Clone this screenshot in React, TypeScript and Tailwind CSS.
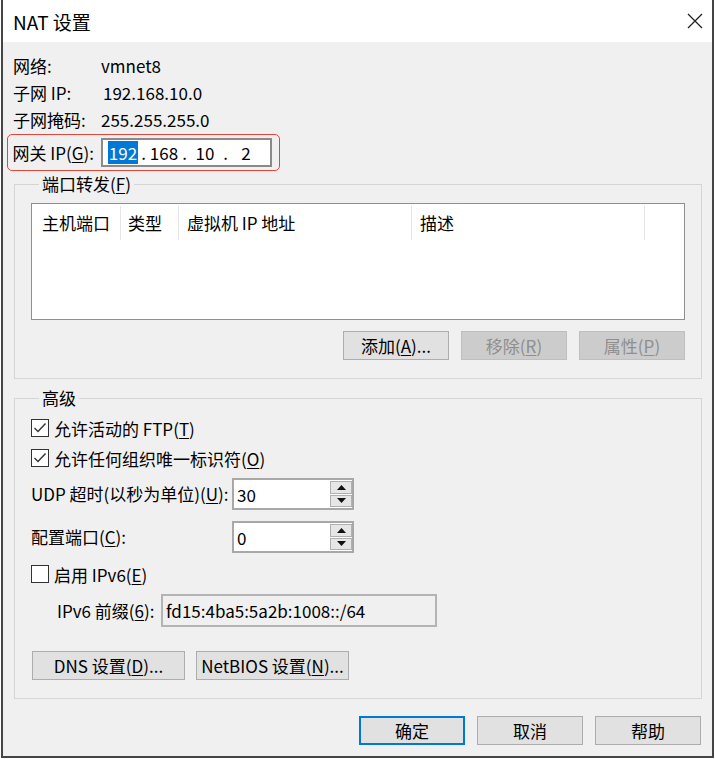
import React from "react";

const FONT = "font-['Noto_Sans_CJK_SC','Noto_Sans',sans-serif]";

function U({ children }: { children: React.ReactNode }) {
  return <span className="underline decoration-1 underline-offset-[2px]">{children}</span>;
}

function Btn({
  children,
  className = "",
  disabled = false,
  primary = false,
}: {
  children: React.ReactNode;
  className?: string;
  disabled?: boolean;
  primary?: boolean;
}) {
  const base = "h-[29px] flex items-center justify-center text-[17px] leading-none";
  const look = disabled
    ? "bg-[#cccccc] border border-[#bfbfbf] text-[#8f8f8f]"
    : primary
    ? "bg-[#e1e1e1] border-2 border-[#0078d7] text-black"
    : "bg-[#e1e1e1] border border-[#adadad] text-black";
  return <div className={`${base} ${look} ${className}`}>{children}</div>;
}

function Checkbox({ checked, label }: { checked: boolean; label: React.ReactNode }) {
  return (
    <div className="h-[30px] flex items-center gap-[5px]">
      <span className="w-[18px] h-[18px] border border-[#333333] bg-white flex items-center justify-center">
        {checked && (
          <svg width="16" height="16" viewBox="0 0 16 16">
            <polyline points="2.5,8 6,11.5 13.5,3.5" fill="none" stroke="#333333" strokeWidth="1.4" />
          </svg>
        )}
      </span>
      <span className="text-[17px] leading-none">{label}</span>
    </div>
  );
}

function SpinBox({ value }: { value: string }) {
  return (
    <div className="w-[122px] h-[32px] border-2 border-[#a8a8a8] bg-white flex">
      <div className="flex-1 pl-[3px] flex items-center text-[17px] leading-none">{value}</div>
      <div className="w-[22px] flex flex-col gap-[1px] py-[1px]">
        <div className="h-[13px] border border-[#b0b0b0] bg-[#e6e6e6] flex items-center justify-center">
          <svg width="9" height="5" viewBox="0 0 9 5">
            <polygon points="0,5 4.5,0 9,5" fill="#111111" />
          </svg>
        </div>
        <div className="h-[13px] border border-[#b0b0b0] bg-[#e6e6e6] flex items-center justify-center">
          <svg width="9" height="5" viewBox="0 0 9 5">
            <polygon points="0,0 9,0 4.5,5" fill="#111111" />
          </svg>
        </div>
      </div>
    </div>
  );
}

function IpField({ value, selected, dot }: { value: string; selected?: boolean; dot: boolean }) {
  return (
    <div className="flex items-center">
      <div className="w-[37px] flex justify-center">
        <span className={selected ? "bg-[#0078d7] text-white px-[1px] leading-[23px]" : "leading-[23px]"}>{value}</span>
      </div>
      <div className="w-[4px] flex justify-center">{dot ? "." : ""}</div>
    </div>
  );
}

export default function App() {
  return (
    <div className={`w-[715px] h-[759px] bg-white text-black ${FONT}`}>
      <div className="ml-[1px] w-[713px] h-[758px] border-2 border-t-0 border-[#454545] flex flex-col">
        {/* Title bar */}
        <div className="h-[42px] bg-white flex items-center justify-between pl-[10px] pr-[9px]">
          <span className="text-[19px] leading-none">NAT 设置</span>
          <svg width="16" height="16" viewBox="0 0 16 16">
            <path d="M1 1 L15 15 M15 1 L1 15" stroke="#222222" strokeWidth="1.3" />
          </svg>
        </div>

        {/* Body */}
        <div className="flex-1 bg-[#f0f0f0] pl-[10px] pt-[10px] flex flex-col text-[17px]">
          <div className="h-[27px] flex items-center">
            <span className="w-[88px]">网络:</span>
            <span>vmnet8</span>
          </div>
          <div className="h-[27px] flex items-center">
            <span className="w-[90px]">子网 IP:</span>
            <span>192.168.10.0</span>
          </div>
          <div className="h-[27px] flex items-center">
            <span className="w-[88px]">子网掩码:</span>
            <span>255.255.255.0</span>
          </div>

          {/* Gateway (highlighted) */}
          <div className="-ml-[6px] mt-[1px] w-[273px] h-[37px] border-[1.5px] border-[#e4463a] rounded-[5px] pl-[4.5px] flex items-center">
            <span className="w-[88px]">
              网关 IP(<U>G</U>):
            </span>
            <div className="w-[171px] h-[29px] border-2 border-[#8a8a8a] bg-white pl-[2px] flex items-center">
              <IpField value="192" selected dot />
              <IpField value="168" dot />
              <IpField value="10" dot />
              <IpField value="2" dot={false} />
            </div>
          </div>

          {/* Port forwarding */}
          <fieldset className="ml-[1px] mt-[2px] w-[688px] border border-[#d5d5d5] pl-[16px] pr-[16px] pt-[8px] pb-[18px]">
            <legend className="ml-[8px] px-[3px] leading-[22px]">
              端口转发(<U>F</U>)
            </legend>
            <div className="h-[117px] w-[654px] border border-[#8e8f96] bg-white">
              <div className="flex h-[34px] mt-[2px]">
                <div className="w-[89px] pl-[10px] flex items-center border-r border-[#e5e5e5]">主机端口</div>
                <div className="w-[58px] pl-[7px] flex items-center border-r border-[#e5e5e5]">类型</div>
                <div className="w-[233px] pl-[8px] flex items-center border-r border-[#e5e5e5]">虚拟机 IP 地址</div>
                <div className="w-[233px] pl-[8px] flex items-center border-r border-[#e5e5e5]">描述</div>
              </div>
            </div>
            <div className="mt-[11px] flex justify-end gap-[12px]">
              <Btn className="w-[106px]">
                添加(<U>A</U>)...
              </Btn>
              <Btn className="w-[106px]" disabled>
                移除(<U>R</U>)
              </Btn>
              <Btn className="w-[106px]" disabled>
                属性(<U>P</U>)
              </Btn>
            </div>
          </fieldset>

          {/* Advanced */}
          <fieldset className="ml-[1px] mt-[8px] w-[688px] border border-[#d5d5d5] pl-[16px] pr-[16px] pt-[4px] pb-[18px]">
            <legend className="ml-[8px] px-[3px] leading-[22px]">高级</legend>
            <Checkbox
              checked
              label={
                <>
                  允许活动的 FTP(<U>T</U>)
                </>
              }
            />
            <Checkbox
              checked
              label={
                <>
                  允许任何组织唯一标识符(<U>O</U>)
                </>
              }
            />
            <div className="mt-[5px] h-[32px] flex items-center">
              <span className="w-[201px]">
                UDP 超时(以秒为单位)(<U>U</U>):
              </span>
              <SpinBox value="30" />
            </div>
            <div className="mt-[11px] h-[32px] flex items-center">
              <span className="w-[201px]">
                配置端口(<U>C</U>):
              </span>
              <SpinBox value="0" />
            </div>
            <div className="mt-[6px]">
              <Checkbox
                checked={false}
                label={
                  <>
                    启用 IPv6(<U>E</U>)
                  </>
                }
              />
            </div>
            <div className="mt-[5px] h-[33px] flex items-center">
              <span className="w-[130px] pl-[26px]">
                IPv6 前缀(<U>6</U>):
              </span>
              <div className="w-[276px] h-[33px] border-2 border-[#b4b4b4] bg-[#f0f0f0] pl-[3px] flex items-center leading-none">
                fd15:4ba5:5a2b:1008::/64
              </div>
            </div>
            <div className="mt-[24px] ml-[1px] flex gap-[11px]">
              <Btn className="w-[153px]">
                DNS 设置(<U>D</U>)...
              </Btn>
              <Btn className="w-[153px]">
                NetBIOS 设置(<U>N</U>)...
              </Btn>
            </div>
          </fieldset>

          {/* Dialog buttons */}
          <div className="mt-[17px] pr-[11px] flex justify-end gap-[12px]">
            <Btn className="w-[106px]" primary>
              确定
            </Btn>
            <Btn className="w-[106px]">取消</Btn>
            <Btn className="w-[106px]">帮助</Btn>
          </div>
        </div>
      </div>
    </div>
  );
}
